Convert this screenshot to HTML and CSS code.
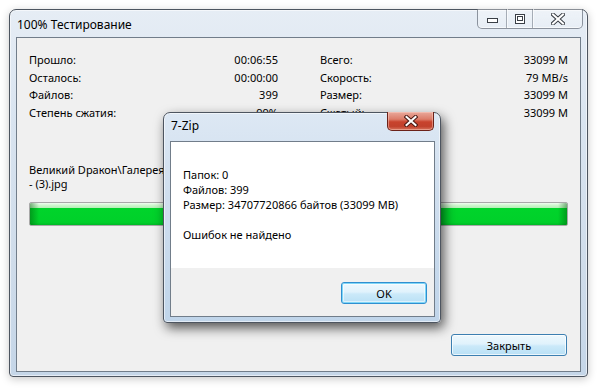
FILE: index.html
```html
<!DOCTYPE html>
<html lang="ru">
<head>
<meta charset="utf-8">
<title>100% Тестирование</title>
<link rel="stylesheet" href="styles.css">
</head>
<body>
<div class="desk">
  <div class="win main">
    <div class="titlebar">
      <span class="title">100% Тестирование</span>
      <div class="caps">
        <span class="cap cap-min"><svg width="11" height="5" viewBox="0 0 11 5"><rect x="0.5" y="0.5" width="10" height="4" fill="#fff" stroke="#3a3f46"/></svg></span>
        <span class="cap cap-max"><svg width="10" height="10" viewBox="0 0 10 10"><rect x="0.5" y="0.5" width="9" height="9" fill="#fff" stroke="#3a3f46"/><rect x="2.5" y="2.5" width="5" height="4" fill="#fff" stroke="#3a3f46"/></svg></span>
        <span class="cap cap-close"><svg width="14" height="12" viewBox="0 0 14 12"><path d="M2 1.5 L12 10.5 M12 1.5 L2 10.5" stroke="#3a3f46" stroke-width="4" stroke-linecap="square"/><path d="M2 1.5 L12 10.5 M12 1.5 L2 10.5" stroke="#fff" stroke-width="2" stroke-linecap="square"/></svg></span>
      </div>
    </div>
    <div class="client">
      <div class="stats">
        <div class="grp">
          <span>Прошло:</span><span class="v">00:06:55</span>
          <span>Осталось:</span><span class="v">00:00:00</span>
          <span>Файлов:</span><span class="v">399</span>
          <span>Степень сжатия:</span><span class="v">99%</span>
        </div>
        <div class="grp">
          <span>Всего:</span><span class="v">33099 M</span>
          <span>Скорость:</span><span class="v">79 MB/s</span>
          <span>Размер:</span><span class="v">33099 M</span>
          <span>Сжатый:</span><span class="v">33099 M</span>
        </div>
      </div>
      <div class="path">Великий Dракон\Галерея\<br>- (3).jpg</div>
      <div class="progress"><div class="fill" style="width:100%"></div></div>
      <div class="actions"><button class="btn btn-close">Закрыть</button></div>
    </div>
  </div>

  <div class="win dlg">
    <div class="titlebar">
      <span class="title">7-Zip</span>
      <span class="red-close"><svg width="14" height="12" viewBox="0 0 14 12"><path d="M2.5 2 L11.5 10 M11.5 2 L2.5 10" stroke="#4a1a14" stroke-width="4" stroke-linecap="square"/><path d="M2.5 2 L11.5 10 M11.5 2 L2.5 10" stroke="#fff" stroke-width="2" stroke-linecap="square"/></svg></span>
    </div>
    <div class="client dlg-client">
      <div class="msg">
        <div>Папок: 0</div>
        <div>Файлов: 399</div>
        <div>Размер: 34707720866 байтов (33099 MB)</div>
        <div class="gap">Ошибок не найдено</div>
      </div>
      <div class="foot"><button class="btn btn-ok">OK</button></div>
    </div>
  </div>
</div>
</body>
</html>
```

FILE: styles.css
```css
* { box-sizing: border-box; }
html, body { margin: 0; padding: 0; }
body {
  width: 598px;
  height: 391px;
  background: #fff;
  font-family: "Noto Sans", "Liberation Sans", sans-serif;
  font-size: 11px;
  color: #000;
  overflow: hidden;
}
.desk {
  position: relative;
  width: 598px;
  height: 391px;
  padding: 9px 0 0 9px;
}
.win {
  display: flex;
  flex-direction: column;
  border: 1px solid #4d5560;
  border-radius: 7px 7px 4px 4px;
  background: linear-gradient(to bottom, #e6edf5 0%, #d9e4f0 30%, #cfdcea 70%, #c5d6e8 100%);
  box-shadow: inset 0 0 0 1px rgba(255,255,255,0.55), 0 2px 8px rgba(0,0,0,0.22);
}
.main {
  width: 579px;
  height: 368px;
  padding: 0 6px 4px 6px;
}
.titlebar {
  position: relative;
  display: flex;
  align-items: flex-start;
  flex: none;
}
.main .titlebar { height: 27px; }
.title {
  font-size: 12px;
  line-height: 15px;
  padding-left: 1px;
  color: #000;
}
.main .title { padding-top: 7px; }
.caps {
  position: absolute;
  top: -1px;
  right: -2px;
  display: flex;
  height: 20px;
  border: 1px solid rgba(60,70,85,0.55);
  border-top: none;
  border-radius: 0 0 5px 5px;
  background: linear-gradient(to bottom, rgba(255,255,255,0.35), rgba(255,255,255,0.15));
  box-shadow: inset 0 -1px 0 rgba(255,255,255,0.6);
  overflow: hidden;
}
.cap {
  display: flex;
  align-items: center;
  justify-content: center;
  height: 100%;
  border-left: 1px solid rgba(60,70,85,0.4);
  box-shadow: inset 1px 0 0 rgba(255,255,255,0.6);
}
.cap-min { width: 28px; border-left: none; box-shadow: none; padding-top: 4px; }
.cap-max { width: 26px; }
.cap-close { width: 50px; }
.client {
  flex: 1;
  display: flex;
  flex-direction: column;
  border: 1px solid #717d8a;
  background: #f0f0f0;
}
.main .client { padding: 13px 12px 15px 12px; }
.stats {
  display: grid;
  grid-template-columns: 249px 248px;
  column-gap: 42px;
}
.grp {
  display: grid;
  grid-template-columns: auto 1fr;
  line-height: 17.6px;
}
.grp .v { text-align: right; }
.path {
  margin-top: 42px;
  line-height: 14px;
  white-space: nowrap;
}
.progress {
  margin-top: 11px;
  height: 24px;
  border: 1px solid #a8a8a8;
  border-radius: 2px;
  background: #e6e6e6;
  overflow: hidden;
}
.fill {
  height: 100%;
  background:
    linear-gradient(to right, rgba(0,90,10,0.45) 0, rgba(0,90,10,0) 9px, rgba(0,90,10,0) calc(100% - 9px), rgba(0,90,10,0.45) 100%),
    linear-gradient(to bottom, #f2fdf2 0, #d2f7d2 2px, #b4efb4 5px, #00d42b 5px, #00d02a 88%, #00b826 100%);
}
.actions {
  margin-top: auto;
  display: flex;
  justify-content: flex-end;
  padding-right: 1px;
}
.btn {
  font-family: inherit;
  font-size: 11px;
  color: #000;
  height: 22px;
  border: 1px solid #3c7fb1;
  border-radius: 3px;
  background: linear-gradient(to bottom, #eef8fd 0%, #e0f2fc 45%, #cbe9f9 55%, #b9e0f5 100%);
  box-shadow: inset 0 0 0 1px rgba(255,255,255,0.7);
  padding: 0;
}
.btn-close { width: 116px; }
.btn-ok {
  width: 86px;
  border-color: #2f8fd0;
  box-shadow: inset 0 0 0 1px #7fd6f7, inset 0 0 0 2px rgba(255,255,255,0.5);
}
.dlg {
  position: absolute;
  left: 163px;
  top: 112px;
  width: 278px;
  height: 211px;
  padding: 0 5px 5px 6px;
  box-shadow: inset 0 0 0 1px rgba(255,255,255,0.55), 3px 5px 12px rgba(0,0,0,0.65);
  background: linear-gradient(to bottom, #dde8f4 0%, #cfdeee 40%, #c0d5ea 100%);
}
.dlg .titlebar { height: 28px; }
.dlg .title { padding-top: 5px; }
.red-close {
  position: absolute;
  top: -1px;
  right: 1px;
  width: 47px;
  height: 19px;
  display: flex;
  align-items: center;
  justify-content: center;
  border: 1px solid #6b2219;
  border-top: none;
  border-radius: 0 0 5px 5px;
  background: linear-gradient(to bottom, #e9a99b 0%, #dc7c69 40%, #c8432d 55%, #c1412c 80%, #d6735c 100%);
  box-shadow: inset 0 0 0 1px rgba(255,210,200,0.45);
}
.dlg-client { background: #fff; }
.msg {
  height: 126px;
  padding: 25px 12px 0 12px;
  line-height: 15px;
  background: #fff;
  white-space: nowrap;
}
.msg .gap { margin-top: 15px; }
.foot {
  flex: 1;
  background: #f0f0f0;
  display: flex;
  justify-content: flex-end;
  align-items: flex-start;
  padding: 14px 7px 0 0;
}
```
